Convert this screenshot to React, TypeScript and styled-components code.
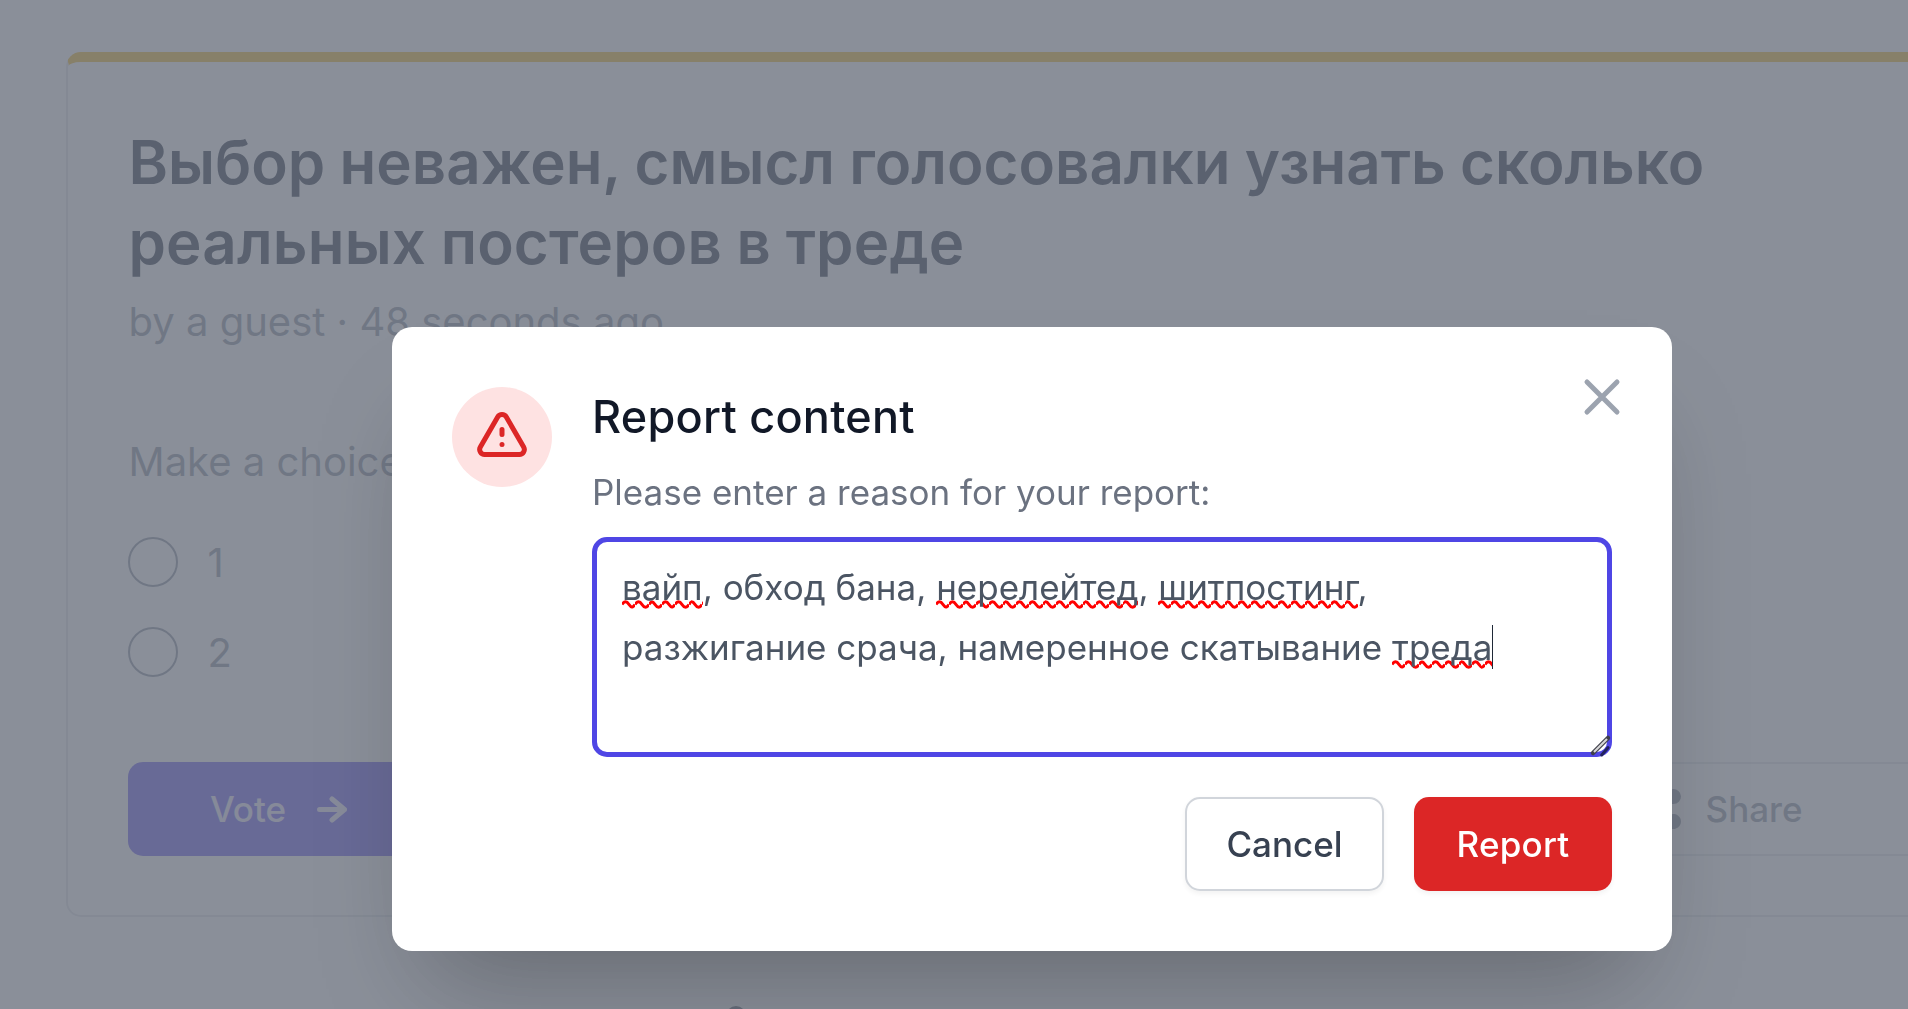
import React from "react";
import styled, { createGlobalStyle } from "styled-components";

const Global = createGlobalStyle`
  html, body { margin: 0; padding: 0; height: 100%; overflow: hidden; background: #fff; }
  * { box-sizing: border-box; }
  body { font-family: Inter, "Liberation Sans", sans-serif; }
`;
const Page = styled.div`
  width: 1908px; height: 1009px; overflow: hidden; padding: 52px 0 0 65.5px; background: #fff;
`;
const Card = styled.section`
  width: 1965.5px; height: 865px; background: #fff;
  border: 2.5px solid #e5e7eb; border-top: 10px solid #f1bf36; border-radius: 15px;
  padding: 60px 60px;
`;
const Title = styled.h1`
  margin: 0 0 0 1px; font-size: 60px; line-height: 80px; font-weight: 600; color: #374151; word-spacing: -0.8px;
`;
const TitleTail = styled.span`
  letter-spacing: 0.18px;
`;
const Meta = styled.p`
  margin: 10px 0 0 1px; font-size: 40px; line-height: 60px; color: #939aa9;
`;
const Prompt = styled.p`
  margin: 80px 0 40px 1px; font-size: 40px; line-height: 60px; color: #939aa9;
`;
const Choice = styled.label`
  display: flex; align-items: center; gap: 30px; height: 60px; margin-bottom: 30px;
  font-size: 40px; color: #939aa9;
`;
const Radio = styled.span`
  width: 50px; height: 50px; border-radius: 50%; border: 2.5px solid #939aa9; flex: none;
`;
const Footer = styled.div`
  display: flex; justify-content: space-between; margin-top: 80px;
`;
const VoteButton = styled.button`
  width: 302px; height: 94px; border: 0; border-radius: 15px; background: #7164f1; color: #ede9ff;
  font: 500 35px Inter, sans-serif; display: flex; align-items: center; justify-content: center; gap: 31px;
`;
const ShareButton = styled.button`
  width: 500px; height: 94px; border: 2.5px solid #e5e7eb; border-radius: 15px; background: transparent;
  color: #939aa9; font: 500 35px Inter, sans-serif;
  display: flex; align-items: center; justify-content: center; gap: 20px;
`;
const PageMark = styled.div`
  width: 20px; height: 20px; border-radius: 50%; background: #6b7280; margin: 89px 0 0 660px;
`;
const Overlay = styled.div`
  position: fixed; inset: 0; background: rgba(101, 108, 121, 0.76); padding: 327px 0 0 392px;
`;
const Modal = styled.div`
  position: relative; width: 1280px; height: 624px; padding: 60px; background: #fff; border-radius: 20px;
  display: flex; gap: 40px;
  box-shadow: 0 62px 100px -35px rgba(0,0,0,.27);
`;
const CloseButton = styled.button`
  position: absolute; top: 40px; right: 40px; width: 60px; height: 60px; padding: 0; border: 0;
  background: none; color: #9ca3af; display: block;
`;
const IconCircle = styled.div`
  width: 100px; height: 100px; border-radius: 50%; background: #fee2e2; color: #dc2626; flex: none;
  display: flex; align-items: center; justify-content: center;
`;
const Body = styled.div`
  flex: 1; min-width: 0;
`;
const DialogTitle = styled.h3`
  margin: 0; font-size: 45px; line-height: 60px; font-weight: 500; color: #111827; letter-spacing: 0.25px;
`;
const DialogText = styled.p`
  margin: 20px 0; font-size: 35px; line-height: 50px; color: #6b7280;
`;
const TextArea = styled.div`
  position: relative; height: 220px; border: 5px solid #4f46e5; border-radius: 15px;
  padding: 15px 25px; font-size: 35px; line-height: 60px; color: #4b5563;
`;
const squiggle =
  "data:image/svg+xml,%3Csvg xmlns='http://www.w3.org/2000/svg' viewBox='0 0 13.33 9'%3E%3Cpath d='M0 4.5Q3.33 -1 6.67 4.5T13.33 4.5' fill='none' stroke='red' stroke-width='2.9'/%3E%3C/svg%3E";
const Misspelled = styled.span`
  padding-bottom: 1px;
  background: url("${squiggle}") 0 100% / 13.33px 9px repeat-x;
`;
const Caret = styled.span`
  display: inline-block; width: 1px; height: 44px; background: #1f2937; vertical-align: -9px;
`;
const ResizeHandle = styled.svg`
  position: absolute; right: -5px; bottom: -5px; width: 24px; height: 24px;
`;
const Actions = styled.div`
  display: flex; justify-content: flex-end; gap: 30px; margin-top: 40px;
`;
const ActionButton = styled.button<{ $danger?: boolean }>`
  width: ${(p) => (p.$danger ? "198px" : "199px")}; height: 94px; border-radius: 15px;
  font: 500 35px Inter, sans-serif; padding: 0;
  border: ${(p) => (p.$danger ? "0" : "2.5px solid #d1d5db")};
  background: ${(p) => (p.$danger ? "#dc2626" : "#fff")};
  color: ${(p) => (p.$danger ? "#fff" : "#374151")};
  letter-spacing: ${(p) => (p.$danger ? "0.2px" : "0")};
  box-shadow: 0 2.5px 5px rgba(0,0,0,.05);
`;

export default function App() {
  return (
    <>
      <Global />
      <Page>
        <Card>
          <Title>
            Выбор неважен, смысл голосовалки узнать сколько <TitleTail>реальных постеров в треде</TitleTail>
          </Title>
          <Meta>by a guest · 48 seconds ago</Meta>
          <Prompt>Make a choice:</Prompt>
          <Choice><Radio />1</Choice>
          <Choice><Radio />2</Choice>
          <Footer>
            <VoteButton>
              Vote
              <svg width="30" height="27" viewBox="0 0 30 27" fill="none" stroke="currentColor" strokeWidth="5" strokeLinecap="round" strokeLinejoin="round">
                <path d="M2.5 13.5H27.5M15 3L27.5 13.5 15 24" />
              </svg>
            </VoteButton>
            <ShareButton>
              <svg width="50" height="50" viewBox="0 0 20 20" fill="currentColor">
                <path d="M15 8a3 3 0 10-2.977-2.63l-4.94 2.47a3 3 0 100 4.319l4.94 2.47a3 3 0 10.895-1.789l-4.94-2.47a3.027 3.027 0 000-.74l4.94-2.47C13.456 7.68 14.19 8 15 8z" />
              </svg>
              Share
            </ShareButton>
          </Footer>
        </Card>
        <PageMark />
      </Page>
      <Overlay>
        <Modal>
          <CloseButton aria-label="Close">
            <svg width="60" height="60" viewBox="0 0 24 24" fill="none" stroke="currentColor" strokeWidth="2" strokeLinecap="round" strokeLinejoin="round">
              <path d="M6 18L18 6M6 6l12 12" />
            </svg>
          </CloseButton>
          <IconCircle>
            <svg width="60" height="60" viewBox="0 0 24 24" fill="none" stroke="currentColor" strokeWidth="2" strokeLinecap="round" strokeLinejoin="round">
              <path d="M12 9v2m0 4h.01m-6.938 4h13.856c1.54 0 2.502-1.667 1.732-3L13.732 4c-.77-1.333-2.694-1.333-3.464 0L3.34 16c-.77 1.333.192 3 1.732 3z" />
            </svg>
          </IconCircle>
          <Body>
            <DialogTitle>Report content</DialogTitle>
            <DialogText>Please enter a reason for your report:</DialogText>
            <TextArea>
              <Misspelled>вайп</Misspelled>, обход бана, <Misspelled>нерелейтед</Misspelled>, <Misspelled>шитпостинг</Misspelled>,
              <br />
              разжигание срача, намеренное скатывание <Misspelled>треда</Misspelled><Caret />
              <ResizeHandle viewBox="0 0 24 24">
                <path d="M5 20L20 5" stroke="#3f3f4a" strokeWidth="4.5" strokeLinecap="round" />
                <path d="M6 19L19 6" stroke="#d8d8d8" strokeWidth="2.2" />
                <path d="M13.7 22L20 14.7" stroke="#23235e" strokeWidth="3" strokeLinecap="round" />
              </ResizeHandle>
            </TextArea>
            <Actions>
              <ActionButton>Cancel</ActionButton>
              <ActionButton $danger>Report</ActionButton>
            </Actions>
          </Body>
        </Modal>
      </Overlay>
    </>
  );
}
